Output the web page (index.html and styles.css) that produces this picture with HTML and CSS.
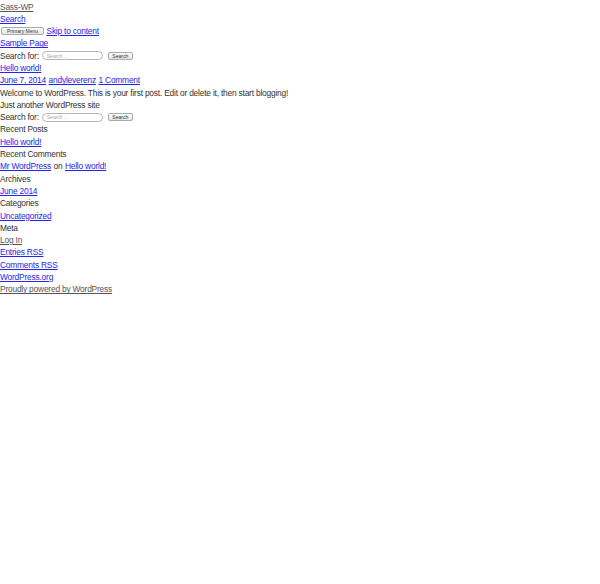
FILE: index.html
```html
<!DOCTYPE html>
<html>
<head>
<meta charset="utf-8">
<link rel="stylesheet" href="styles.css">
</head>
<body>
<div class="page">
  <div class="line"><a class="muted" href="#">Sass-WP</a></div>
  <div class="line"><a href="#">Search</a></div>
  <div class="line"><button class="btn menu-btn">Primary Menu</button> <a href="#">Skip to content</a></div>
  <div class="line"><a href="#">Sample Page</a></div>
  <div class="line search"><span>Search for:</span><input class="field" type="text" placeholder="Search …"><button class="btn">Search</button></div>
  <div class="line"><a href="#">Hello world!</a></div>
  <div class="line"><a href="#">June 7, 2014</a> <a href="#">andyleverenz</a> <a href="#">1 Comment</a></div>
  <div class="line">Welcome to WordPress. This is your first post. Edit or delete it, then start blogging!</div>
  <div class="line">Just another WordPress site</div>
  <div class="line search"><span>Search for:</span><input class="field" type="text" placeholder="Search …"><button class="btn">Search</button></div>
  <div class="line">Recent Posts</div>
  <div class="line"><a href="#">Hello world!</a></div>
  <div class="line">Recent Comments</div>
  <div class="line"><a href="#">Mr WordPress</a> on <a href="#">Hello world!</a></div>
  <div class="line">Archives</div>
  <div class="line"><a href="#">June 2014</a></div>
  <div class="line">Categories</div>
  <div class="line"><a href="#">Uncategorized</a></div>
  <div class="line">Meta</div>
  <div class="line"><a class="muted" href="#">Log In</a></div>
  <div class="line"><a href="#">Entries RSS</a></div>
  <div class="line"><a href="#">Comments RSS</a></div>
  <div class="line"><a href="#">WordPress.org</a></div>
  <div class="line"><a class="muted" href="#">Proudly powered by WordPress</a></div>
</div>
</body>
</html>
```
FILE: styles.css
```css
html, body {
  margin: 0;
  padding: 0;
  background: #fff;
}
body {
  font-family: "Liberation Sans", Arial, sans-serif;
  font-size: 8.4px;
  letter-spacing: -0.2px;
  line-height: 12.3px;
  color: #333;
}
.page {
  display: flex;
  flex-direction: column;
  padding-top: 0.5px;
}
.line {
  height: 12.3px;
  white-space: nowrap;
  display: flex;
  align-items: center;
  gap: 2.5px;
}
a {
  color: #2626e8;
  text-decoration: underline;
}
a.muted {
  color: #555;
}
.btn {
  font-family: "Liberation Sans", Arial, sans-serif;
  font-size: 5px;
  letter-spacing: 0;
  line-height: 6px;
  height: 8px;
  padding: 0 3px;
  margin: 0 0 0 1px;
  border: 1px solid #aaa;
  border-radius: 2px;
  background: linear-gradient(#fbfbfb, #e6e6e6);
  color: #333;
}
.menu-btn {
  width: 43px;
}
.search {
  gap: 0;
}
.search span {
  margin-right: 3px;
}
.field {
  width: 61px;
  height: 9px;
  box-sizing: border-box;
  border: 1px solid #b5b5b5;
  border-radius: 5px;
  padding: 0 4px;
  font-family: "Liberation Sans", Arial, sans-serif;
  font-size: 5px;
  letter-spacing: 0;
  margin-right: 4px;
  outline: none;
}
.field::placeholder {
  color: #aaa;
}
.search .btn {
  width: 25px;
  padding: 0;
}
```
